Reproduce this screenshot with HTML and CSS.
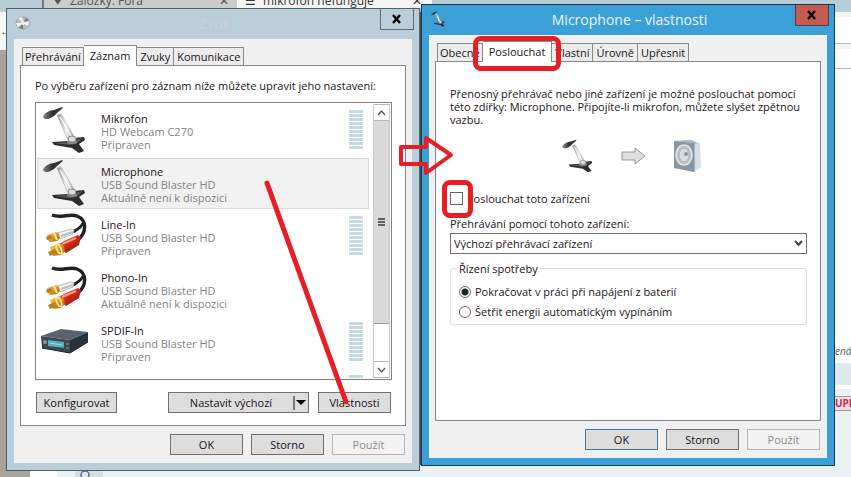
FILE: index.html
```
<!DOCTYPE html>
<html lang="cs">
<head>
    <meta charset="UTF-8">
    <meta name="viewport" content="width=device-width, initial-scale=1.0">
    <title>Zvuk</title>
    <link rel="stylesheet" href="styles.css">
</head>
<body>
    <svg class="defs" aria-hidden="true">
        <defs>
            <linearGradient id="silver" x1="0" y1="0" x2="1" y2="0">
                <stop offset="0" stop-color="#888"/>
                <stop offset=".5" stop-color="#f4f4f4"/>
                <stop offset="1" stop-color="#999"/>
            </linearGradient>
            <linearGradient id="gold" x1="0" y1="0" x2="1" y2="1">
                <stop offset="0" stop-color="#f7d878"/>
                <stop offset=".5" stop-color="#d99a20"/>
                <stop offset="1" stop-color="#8a5a10"/>
            </linearGradient>
            <linearGradient id="red" x1="0" y1="0" x2="1" y2="1">
                <stop offset="0" stop-color="#f07050"/>
                <stop offset=".5" stop-color="#d02818"/>
                <stop offset="1" stop-color="#7c0f0a"/>
            </linearGradient>
            <linearGradient id="head" x1="0" y1="0" x2="1" y2="0">
                <stop offset="0" stop-color="#888"/>
                <stop offset=".5" stop-color="#2b2b2b"/>
                <stop offset="1" stop-color="#444"/>
            </linearGradient>
            <symbol id="mic" viewBox="0 0 48 48">
                <path d="M16 9 L20 8 L34 32 L27 34 Z" fill="url(#silver)" stroke="#aaa" stroke-width=".6"/>
                <path d="M19 11 L31 32" stroke="#fff" stroke-width="1.2"/>
                <path d="M2 11 C3 7 9 4 13 4 L21 1 L22 2 L16 7 C13 11 4 16 2 11 Z" fill="url(#head)"/>
                <path d="M11 36 L27 35 L33 32 L43 31 L44 34 L38 38 L43 45 L38 47 L31 42 L13 39 Z" fill="#2d2d2d"/>
                <path d="M14 37 L27 36 L42 32 L35 38 L28 39 Z" fill="#5b5b5b"/>
                <ellipse cx="31" cy="36" rx="5" ry="2" fill="#888"/>
                <ellipse cx="31" cy="33" rx="4" ry="3" fill="#ddd" stroke="#888"/>
            </symbol>
            <symbol id="cable" viewBox="0 0 48 48">
                <path d="M11 3 C20 7 28 1 36 4 C46 8 46 20 37 28" fill="none" stroke="#222" stroke-width="3.4"/>
                <path d="M42 11 C41 15 37 17 32 20" fill="none" stroke="#222" stroke-width="3"/>
                <path d="M16 21 L30 17 L33 18 L32 22 L19 27 Z" fill="#f0f0f0" stroke="#aaa" stroke-width=".8"/>
                <path d="M20 24 L32 20" stroke="#b9bec2" stroke-width="2"/>
                <path d="M6 23 L15 20 L18 22 L19 26 L16 29 L9 30 L6 27 Z" fill="url(#gold)"/>
                <path d="M5 25 L10 23 L11 26 L6 28 Z" fill="#b27c1c"/>
                <path d="M13 21 L16 28" stroke="#fae69a" stroke-width="2"/>
                <path d="M16 33 L25 28 L37 23 L40 25 L38 33 L25 41 Z" fill="url(#red)"/>
                <path d="M21 32 L35 26" stroke="#ff9a80" stroke-width="2"/>
                <path d="M9 35 L18 31 L23 34 L24 39 L20 43 L12 44 Z" fill="url(#gold)"/>
                <path d="M7 40 L14 37 L16 41 L9 44 Z" fill="#b98220"/>
                <ellipse cx="18" cy="37" rx="2" ry="5" transform="rotate(-25 18 37)" fill="none" stroke="#fbe79c" stroke-width="1.6"/>
            </symbol>
            <symbol id="deck" viewBox="0 0 48 48">
                <path d="M0 18 L20 11 L47 14 L29 22 Z" fill="#59636d"/>
                <path d="M29 22 L47 14 L47 24 L29 35 Z" fill="#26323c"/>
                <path d="M0 18 L29 22 L29 35 L1 30 Z" fill="#3b4751"/>
                <path d="M7 22 L23 24 L23 30 L7 28 Z" fill="#5aaeb9"/>
                <path d="M9 25 L21 27" stroke="#9be0e6"/>
                <circle cx="4" cy="24" r="2" fill="#8b98a2"/>
                <path d="M25 26 H28 M25 30 H28" stroke="#8b98a2"/>
                <path d="M1 30 L29 35 L47 24" fill="none" stroke="#1b242b"/>
            </symbol>
            <symbol id="speaker" viewBox="0 0 32 34">
                <path d="M1 2 L18 1 L27 5 L28 28 L21 33 L1 29 Z" fill="#d7dde3"/>
                <path d="M1 2 L21 4 L21 33 L1 29 Z" fill="#8896a3"/>
                <path d="M1 2 L18 1 L27 5 L21 4 Z" fill="#a9b4bd"/>
                <path d="M21 4 V33" stroke="#6f93b0"/>
                <ellipse cx="11" cy="16" rx="8" ry="10" fill="#b9c2c8" stroke="#dfe5e8" stroke-width="1.6"/>
                <ellipse cx="11" cy="16" rx="5" ry="7" fill="#d9dddf" stroke="#a3adb4" stroke-width=".8"/>
                <circle cx="13" cy="15" r="2" fill="#8d969c"/>
            </symbol>
            <symbol id="disc" viewBox="0 0 16 16">
                <ellipse cx="8" cy="8" rx="7" ry="6" fill="#b9bfc1" stroke="#a0abaf"/>
                <path d="M8 8 L3 3 L7 2 Z M8 8 L14 6 L13 11 Z M8 8 L3 12 L1 8 Z" fill="#f4f4f4"/>
                <path d="M8 8 L11 3 L14 5 Z M8 8 L8 14 L4 13 Z" fill="#727b7e"/>
                <circle cx="8" cy="8" r="2" fill="#eee"/>
            </symbol>
            <symbol id="meter" viewBox="0 0 14 39">
                <path d="M7 0 V39" stroke="#c5dae1" stroke-width="14" stroke-dasharray="3 1"/>
            </symbol>
        </defs>
    </svg>

    <div class="desktop">
        <!-- browser window behind the dialogs -->
        <div class="browser" aria-hidden="true">
            <div class="browser-tabs">
                <span class="browser-tab"><span class="tab-icon">&#9829;</span><span>Záložky: Fóra</span><span class="tab-x">&#10005;</span></span>
                <span class="browser-tab current"><span class="tab-icon">&#9776;</span><span>mikrofon nefunguje</span><span class="tab-x">&#10005;</span></span>
            </div>
            <div class="browser-left"><span>&#8592;</span></div>
            <div class="browser-right">
                <div class="toolbar"></div>
                <div class="bookmarks"></div>
                <div class="snippet">ená</div>
                <div class="band"></div>
                <div class="badge-row"><span class="badge">UPR</span></div>
            </div>
            <div class="browser-bottom">
                <span class="search-chip"><svg width="14" height="14" viewBox="0 0 14 14"><circle cx="7" cy="5" r="4" fill="#dde8f2" stroke="#667" stroke-width="1.5"/><path d="M10 8 L13 12" stroke="#667" stroke-width="2"/></svg></span>
            </div>
        </div>

        <section class="window window-sound">
            <header class="titlebar">
                <svg class="title-icon" width="16" height="16"><use href="#disc"/></svg>
                <h1 class="title">Zvuk</h1>
                <button class="close" aria-label="Zavřít"><svg width="10" height="10" viewBox="0 0 10 10"><path d="M1 1 L8 9 M8 1 L1 9" stroke="currentColor" stroke-width="2.4"/></svg></button>
            </header>
            <div class="client">
                <nav class="tabs">
                    <button class="tab">Přehrávání</button>
                    <button class="tab active">Záznam</button>
                    <button class="tab">Zvuky</button>
                    <button class="tab">Komunikace</button>
                </nav>
                <div class="panel">
                    <p class="intro">Po výběru zařízení pro záznam níže můžete upravit jeho nastavení:</p>
                    <div class="device-box">
                        <ul class="devices">
                            <li class="device">
                                <svg class="device-icon"><use href="#mic"/></svg>
                                <div class="device-text"><strong>Mikrofon</strong><span>HD Webcam C270</span><span>Připraven</span></div>
                                <svg class="meter"><use href="#meter"/></svg>
                            </li>
                            <li class="device selected">
                                <svg class="device-icon"><use href="#mic"/></svg>
                                <div class="device-text"><strong>Microphone</strong><span>USB Sound Blaster HD</span><span>Aktuálně není k dispozici</span></div>
                            </li>
                            <li class="device">
                                <svg class="device-icon"><use href="#cable"/></svg>
                                <div class="device-text"><strong>Line-In</strong><span>USB Sound Blaster HD</span><span>Připraven</span></div>
                                <svg class="meter"><use href="#meter"/></svg>
                            </li>
                            <li class="device">
                                <svg class="device-icon"><use href="#cable"/></svg>
                                <div class="device-text"><strong>Phono-In</strong><span>USB Sound Blaster HD</span><span>Aktuálně není k dispozici</span></div>
                            </li>
                            <li class="device">
                                <svg class="device-icon"><use href="#deck"/></svg>
                                <div class="device-text"><strong>SPDIF-In</strong><span>USB Sound Blaster HD</span><span>Připraven</span></div>
                                <svg class="meter"><use href="#meter"/></svg>
                            </li>
                            <li class="device next">
                                <svg class="meter"><use href="#meter"/></svg>
                            </li>
                        </ul>
                        <div class="scrollbar">
                            <button class="scroll-btn" aria-label="Nahoru"><svg width="9" height="6" viewBox="0 0 9 6"><path d="M1 5 L4.5 1 L8 5" fill="none" stroke="#555" stroke-width="1.3"/></svg></button>
                            <div class="thumb"><span class="grip"></span></div>
                            <button class="scroll-btn" aria-label="Dolů"><svg width="9" height="6" viewBox="0 0 9 6"><path d="M1 1 L4.5 5 L8 1" fill="none" stroke="#555" stroke-width="1.3"/></svg></button>
                        </div>
                    </div>
                    <div class="device-actions">
                        <button class="btn btn-config">Konfigurovat</button>
                        <button class="btn btn-default"><span>Nastavit výchozí</span><svg width="15" height="16" viewBox="0 0 15 16"><path d="M1 1 V15" stroke="#555" stroke-width="1.5"/><path d="M3 5 H13 L8 10 Z" fill="#000"/></svg></button>
                        <button class="btn">Vlastnosti</button>
                    </div>
                </div>
                <footer class="footer">
                    <button class="btn">OK</button>
                    <button class="btn">Storno</button>
                    <button class="btn" disabled>Použít</button>
                </footer>
            </div>
        </section>

        <section class="window window-mic">
            <header class="titlebar">
                <svg class="title-icon" width="16" height="16"><use href="#mic"/></svg>
                <h1 class="title">Microphone – vlastnosti</h1>
                <button class="close" aria-label="Zavřít"><svg width="10" height="10" viewBox="0 0 10 10"><path d="M1 1 L8 9 M8 1 L1 9" stroke="currentColor" stroke-width="2.4"/></svg></button>
            </header>
            <div class="client">
                <nav class="tabs">
                    <button class="tab">Obecné</button>
                    <button class="tab active">Poslouchat<span class="mark mark-tab"></span></button>
                    <button class="tab">Vlastní</button>
                    <button class="tab">Úrovně</button>
                    <button class="tab">Upřesnit</button>
                </nav>
                <div class="panel panel-listen">
                    <p class="info">Přenosný přehrávač nebo jiné zařízení je možné poslouchat pomocí této zdířky: Microphone. Připojíte-li mikrofon, můžete slyšet zpětnou vazbu.</p>
                    <div class="route">
                        <svg width="34" height="34"><use href="#mic"/></svg>
                        <svg width="26" height="18" viewBox="0 0 26 18"><path d="M1 5 H14 V1 L24 9 L14 17 V13 H1 Z" fill="#dedede" stroke="#999"/></svg>
                        <svg width="32" height="34"><use href="#speaker"/></svg>
                    </div>
                    <div class="listen">
                        <span class="check-wrap"><input class="check" type="checkbox" id="listen"><span class="mark mark-check"></span></span>
                        <label for="listen">Poslouchat toto zařízení</label>
                    </div>
                    <label class="playback-label" for="playback">Přehrávání pomocí tohoto zařízení:</label>
                    <div class="select-wrap">
                        <select class="playback" id="playback"><option>Výchozí přehrávací zařízení</option></select>
                        <svg class="chevron" width="9" height="7" viewBox="0 0 9 7"><path d="M1 1 L4.5 5 L8 1" fill="none" stroke="#444" stroke-width="2"/></svg>
                    </div>
                    <fieldset class="power">
                        <legend>Řízení spotřeby</legend>
                        <label><input class="radio" type="radio" name="power" checked>Pokračovat v práci při napájení z baterií</label>
                        <label><input class="radio" type="radio" name="power">Šetřit energii automatickým vypínáním</label>
                    </fieldset>
                </div>
                <footer class="footer">
                    <button class="btn btn-primary">OK</button>
                    <button class="btn">Storno</button>
                    <button class="btn" disabled>Použít</button>
                </footer>
            </div>
        </section>

        <!-- hand drawn arrows -->
        <svg class="marks" width="851" height="477" viewBox="0 0 851 477" aria-hidden="true">
            <path d="M267 183 L346 402" stroke="#e61e25" stroke-width="5" stroke-linecap="round"/>
            <path d="M401 147 H426 V138 L451 155 L426 173 V164 H401 Z" fill="none" stroke="#e61e25" stroke-width="4" stroke-linejoin="round"/>
        </svg>
    </div>
</body>
</html>
```

FILE: styles.css
```
*, *::before, *::after {
    box-sizing: border-box;
}
body {
    margin: 0;
    font-family: "Open Sans", "Noto Sans", sans-serif;
    font-size: 11px;
    line-height: 13px;
    color: #1a1420;
}
button, select, input {
    font: inherit;
    color: inherit;
    margin: 0;
}
h1, p, ul {
    margin: 0;
    padding: 0;
}
.defs {
    position: absolute;
    width: 0;
    height: 0;
}
.desktop {
    position: relative;
    display: flex;
    align-items: flex-start;
    gap: 1px;
    min-height: 100vh;
    padding: 4px 16px 0 6px;
    background: #fff;
    overflow: hidden;
}

/* browser in the background */
.browser {
    position: absolute;
    inset: 0;
    overflow: hidden;
    background: #4c535c;
}
.browser-tabs {
    display: flex;
    height: 12px;
    padding-left: 42px;
    background: #b8cdd5;
}
.browser-tab {
    display: flex;
    align-items: flex-end;
    gap: 2px;
    width: 195px;
    height: 8px;
    padding: 0 8px 0 10px;
    border-left: 2px solid #777;
    background: #cccccd;
    color: #555;
    font-size: 12px;
    line-height: 14px;
    white-space: nowrap;
    overflow: hidden;
}
.browser-tab.current {
    gap: 4px;
    padding: 0 10px 0 8px;
    border: 0;
    background: #f5f5f5;
    color: #333;
}
.tab-icon {
    width: 14px;
}
.tab-x {
    margin-left: auto;
}
.browser-left {
    position: absolute;
    top: 12px;
    bottom: 0;
    left: 0;
    width: 30px;
    padding-top: 12px;
    background: linear-gradient(#f4f7f8 38px, #a9a39c 38px);
    color: #555;
}
.browser-right {
    position: absolute;
    top: 12px;
    bottom: 0;
    right: 0;
    width: 16px;
    background: #fff;
}
.toolbar {
    height: 32px;
    border-top: 5px solid #f1f4f5;
    border-bottom: 1px solid #bbb;
}
.bookmarks {
    height: 25px;
    border-top: 5px solid #f1f4f5;
    border-bottom: 1px solid #bbb;
}
.snippet {
    height: 294px;
    padding-top: 276px;
    font-size: 10px;
    font-style: italic;
    color: #555;
}
.band {
    height: 22px;
    background: #dfe9ef;
}
.badge-row {
    height: 100px;
    margin-top: 4px;
    padding-top: 7px;
    background: #e9f1f5;
}
.badge {
    display: block;
    border: 1px solid #999;
    border-width: 1px 0;
    background: #f3dfe3;
    color: #bc2d4d;
    font-size: 10px;
    font-weight: bold;
    overflow: hidden;
}
.browser-bottom {
    position: absolute;
    left: 30px;
    right: 0;
    bottom: 0;
    height: 12px;
    padding-left: 45px;
    background: linear-gradient(90deg, #fff 27px, #ebf2f6 27px);
}
.search-chip {
    display: block;
    width: 28px;
    height: 8px;
    margin-top: 5px;
    padding-left: 3px;
    background: #d8dde0;
    overflow: hidden;
}

/* dialogs */
.window {
    position: relative;
    flex: 1 1 0;
    min-width: 0;
    padding: 0 7px 7px;
    border: 1px solid #4d616c;
    background: #b9ced9;
}
.window-sound {
    margin-top: 4px;
}
.window-mic {
    border-color: #17384d;
    background: #3b9fd8;
}
.titlebar {
    display: flex;
    align-items: flex-start;
    height: 30px;
    margin-right: -2px;
}
.title-icon {
    margin: 6px 0 0 1px;
}
.title {
    flex: 1;
    padding-left: 18px;
    font-size: 14px;
    line-height: 30px;
    font-weight: normal;
    text-align: center;
    color: #cbd3d7;
}
.window-mic .title {
    color: #e9f6ff;
}
.close {
    display: flex;
    align-items: center;
    justify-content: center;
    width: 34px;
    height: 21px;
    padding: 0;
    border: 1px solid #566e7b;
    border-top: 0;
    background: #b9ced9;
    color: #000;
}
.window-mic .close {
    border-color: #5a3b45;
    background: #c35b50;
}
.client {
    padding: 6px 6px 8px;
    background: #f0f0f0;
}
.tabs {
    display: flex;
    align-items: flex-end;
    padding-left: 2px;
}
.tab {
    height: 18px;
    padding: 0 3px;
    border: 1px solid #898989;
    border-bottom: 0;
    border-left: 0;
    background: #ececec;
    line-height: 17px;
    white-space: nowrap;
}
.tab:first-child {
    padding: 0 2px;
    border-left: 1px solid #898989;
}
.tab.active {
    position: relative;
    height: 21px;
    margin-bottom: -1px;
    padding: 0 6px 2px;
    background: #fff;
}
.panel {
    padding: 12px 13px 12px 14px;
    border: 1px solid #828790;
    background: #fff;
}
.intro {
    line-height: 16px;
    white-space: nowrap;
}
.device-box {
    display: flex;
    height: 278px;
    margin-top: 8px;
    padding: 1px;
    border: 1px solid #828282;
}
.devices {
    flex: 1;
    min-width: 0;
    padding-top: 1px;
    list-style: none;
    overflow: hidden;
}
.device {
    display: flex;
    height: 51px;
    margin: 0 4px 2px 0;
    padding: 0 5px 0 3px;
    border: 1px solid transparent;
}
.device.selected {
    border-color: #d9d9d9;
    background: #f1f1f1;
}
.device-icon {
    flex: none;
    width: 48px;
    height: 48px;
}
.device-text {
    display: flex;
    flex-direction: column;
    flex: 1;
    padding: 6px 0 0 12px;
    color: #838383;
    white-space: nowrap;
}
.device-text strong {
    font-weight: normal;
    color: #1a1420;
}
.meter {
    width: 14px;
    height: 39px;
    margin-top: 4px;
}
.next .meter {
    margin-left: auto;
}
.scrollbar {
    display: flex;
    flex-direction: column;
    width: 17px;
    background: #fff;
    border: 1px solid #c8c8c8;
    border-width: 0 1px;
}
.scroll-btn {
    display: flex;
    align-items: center;
    justify-content: center;
    height: 17px;
    padding: 0;
    border: 1px solid #b5b5b5;
    border-width: 1px 0;
    background: #fff;
}
.thumb {
    display: flex;
    align-items: center;
    justify-content: center;
    height: 203px;
    margin-bottom: auto;
    border-bottom: 1px solid #999;
    background: #dadada;
}
.grip {
    width: 7px;
    height: 8px;
    background: repeating-linear-gradient(#606060 0 2px, transparent 2px 3px);
}
.device-actions {
    display: flex;
    gap: 9px;
    margin-top: 12px;
    padding: 0 1px;
}
.btn {
    width: 73px;
    height: 21px;
    padding: 0;
    border: 1px solid #707070;
    background: #dddddd;
    line-height: 18px;
    text-align: center;
}
.btn:disabled {
    border-color: #b5b5b5;
    background: #f2f2f2;
    color: #8c8c8c;
}
.btn-primary {
    border-color: #3b78a8;
}
.btn-config {
    width: 81px;
    margin-right: auto;
}
.btn-default {
    display: flex;
    align-items: center;
    width: 141px;
}
.btn-default span {
    flex: 1;
}
.footer {
    display: flex;
    justify-content: flex-end;
    gap: 8px;
    padding: 8px 1px 0 0;
}

/* listen tab */
.panel-listen {
    min-height: 360px;
    padding-top: 25px;
}
.route {
    display: flex;
    align-items: center;
    justify-content: center;
    gap: 26px;
    margin: 13px 0 19px;
    padding-left: 8px;
}
.listen {
    display: flex;
    align-items: center;
    gap: 4px;
}
.check-wrap {
    position: relative;
    height: 13px;
}
.check {
    display: block;
    width: 13px;
    height: 13px;
    appearance: none;
    border: 1px solid #666;
    background: #fff;
}
.playback-label {
    display: block;
    margin: 12px 0 3px;
}
.select-wrap {
    display: grid;
    align-items: center;
}
.playback {
    grid-area: 1 / 1;
    width: 100%;
    height: 21px;
    padding: 0 3px;
    appearance: none;
    border: 1px solid #707070;
    border-radius: 0;
    background: #fff;
}
.chevron {
    grid-area: 1 / 1;
    justify-self: end;
    margin-right: 4px;
    pointer-events: none;
}
.power {
    display: flex;
    flex-direction: column;
    gap: 7px;
    margin: 8px 0 0;
    padding: 10px 8px 6px;
    border: 1px solid #dcdcdc;
    border-radius: 3px;
}
.power legend {
    padding: 0 2px;
    margin-left: -2px;
}
.power label {
    display: flex;
    align-items: center;
    gap: 4px;
}
.radio {
    width: 12px;
    height: 12px;
    appearance: none;
    border: 1px solid #666;
    border-radius: 50%;
    background: #fff;
}
.radio:checked {
    background: radial-gradient(#222 3px, #fff 4px);
}

/* red highlights */
.mark {
    position: absolute;
    border: 5px solid #e61e25;
    border-radius: 8px;
    pointer-events: none;
    z-index: 2;
}
.mark-tab {
    inset: -6px -10px -9px -10px;
}
.mark-check {
    inset: -12px -10px -13px -8px;
}
.marks {
    position: absolute;
    top: 0;
    left: 0;
    pointer-events: none;
}
```
